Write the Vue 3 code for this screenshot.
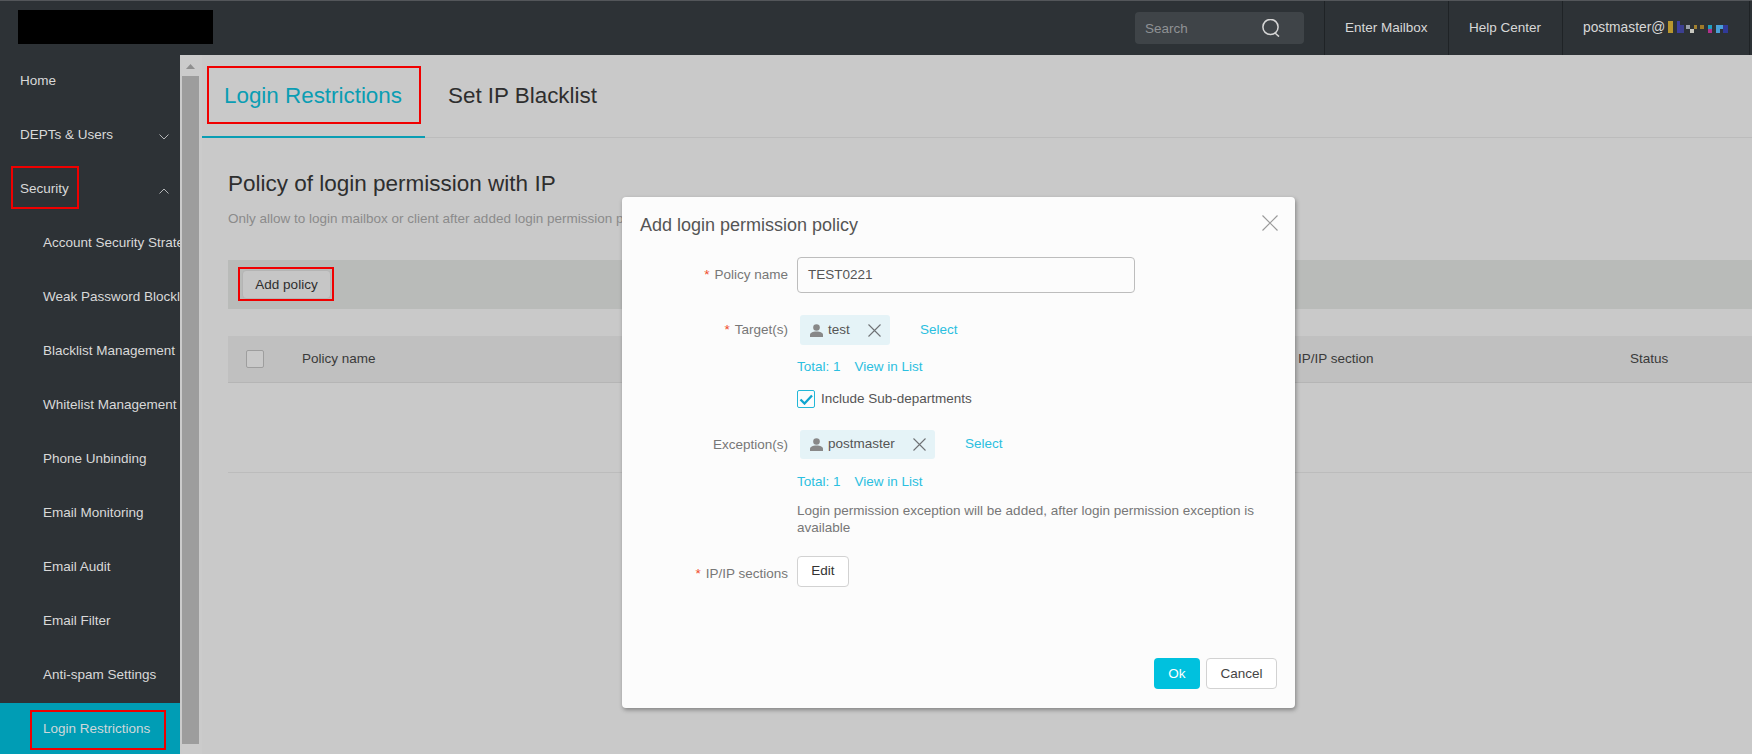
<script setup>
const navTop = [
  { label: 'Home' },
  { label: 'DEPTs & Users', chevron: 'down' },
  { label: 'Security', chevron: 'up' },
]
const navSub = [
  'Account Security Strategy',
  'Weak Password Blocklist',
  'Blacklist Management',
  'Whitelist Management',
  'Phone Unbinding',
  'Email Monitoring',
  'Email Audit',
  'Email Filter',
  'Anti-spam Settings',
]
const mosaic = [
  { x: 0, y: 0, w: 5, h: 12, c: '#b8962e' },
  { x: 9, y: 0, w: 3, h: 12, c: '#3c3fa0' },
  { x: 12, y: 4, w: 4, h: 8, c: '#3c3f90' },
  { x: 18, y: 4, w: 4, h: 4, c: '#9aa0a8' },
  { x: 22, y: 8, w: 4, h: 4, c: '#c8c8c0' },
  { x: 26, y: 4, w: 3, h: 4, c: '#a08030' },
  { x: 32, y: 4, w: 4, h: 4, c: '#a07a28' },
  { x: 40, y: 4, w: 4, h: 4, c: '#1f9fc0' },
  { x: 40, y: 8, w: 4, h: 4, c: '#b0308a' },
  { x: 48, y: 4, w: 4, h: 8, c: '#4aa0d8' },
  { x: 52, y: 4, w: 3, h: 4, c: '#4aa0d8' },
  { x: 55, y: 4, w: 5, h: 8, c: '#303a98' },
]
</script>

<template>
  <div class="page">
    <header class="topbar">
      <div class="logo"></div>
      <div class="search">
        <span class="search-text">Search</span>
        <svg class="search-icon" width="18" height="18" viewBox="0 0 18 18" fill="none">
          <circle cx="8.5" cy="8" r="7.6" stroke="#d6d6d6" stroke-width="1.5" />
          <path d="M13 14l4 3.6" stroke="#d6d6d6" stroke-width="1.5" />
        </svg>
      </div>
      <a class="top-link link-mail">Enter Mailbox</a>
      <a class="top-link link-help">Help Center</a>
      <a class="top-link link-user">
        <span class="user-name">postmaster@</span>
        <svg class="mosaic" width="60" height="12" viewBox="0 0 60 12">
          <rect v-for="(m, i) in mosaic" :key="i" :x="m.x" :y="m.y" :width="m.w" :height="m.h" :fill="m.c" />
        </svg>
      </a>
    </header>

    <div class="body">
      <nav class="sidebar">
        <div v-for="item in navTop" :key="item.label" class="nav-item">
          <span>{{ item.label }}</span>
          <svg v-if="item.chevron" class="chevron" width="10" height="6" viewBox="0 0 10 6" fill="none">
            <path :d="item.chevron === 'down' ? 'M.5 .5L5 5l4.500-4.500' : 'M.5 5.500L5 1l4.500 4.500'" stroke="#b4b6b8" stroke-width="1" />
          </svg>
        </div>
        <div v-for="label in navSub" :key="label" class="nav-item nav-sub">
          <span>{{ label }}</span>
        </div>
        <div class="nav-item nav-sub nav-active"><span>Login Restrictions</span></div>
      </nav>

      <div class="scrollbar">
        <svg class="scroll-arrow" width="9" height="5" viewBox="0 0 9 5"><path d="M4.500 0L9 5H0z" fill="#8f8f8f" /></svg>
        <div class="scroll-thumb"></div>
      </div>

      <main class="main">
        <div class="tabs">
          <div class="tab tab-active">Login Restrictions</div>
          <div class="tab">Set IP Blacklist</div>
        </div>
        <section class="content">
          <h1 class="title">Policy of login permission with IP</h1>
          <p class="subtitle">Only allow to login mailbox or client after added login permission policy</p>
          <div class="toolbar">
            <button class="add-btn">Add policy</button>
          </div>
          <div class="thead">
            <span class="th-check"></span>
            <span class="th-name">Policy name</span>
            <span class="th-ip">IP/IP section</span>
            <span class="th-status">Status</span>
          </div>
          <div class="tbody"></div>
        </section>
      </main>
    </div>

    <div class="modal">
      <div class="modal-title">Add login permission policy</div>
      <svg class="modal-close" width="16" height="16" viewBox="0 0 16 16" fill="none">
        <path d="M.5 .5l15 15M15.500 .5l-15 15" stroke="#9a9a9a" stroke-width="1.200" />
      </svg>

      <div class="row row-name">
        <label class="label"><i>*</i>Policy name</label>
        <div class="value"><div class="input">TEST0221</div></div>
      </div>

      <div class="row row-tag">
        <label class="label label-tag"><i>*</i>Target(s)</label>
        <div class="value">
          <div class="tag-line">
            <span class="tag tag-test">
              <svg class="person" width="13" height="13" viewBox="0 0 13 13"><circle cx="6.500" cy="3.500" r="3.300" fill="#888" /><path d="M0 13v-2.200C0 9 2.500 7.600 6.500 7.600S13 9 13 10.800V13z" fill="#888" /></svg>
              <span class="tag-text">test</span>
              <svg class="tag-x" width="13" height="13" viewBox="0 0 13 13" fill="none"><path d="M.5 .5l12 12M12.500 .5l-12 12" stroke="#6f7275" stroke-width="1.100" /></svg>
            </span>
            <a class="link select">Select</a>
          </div>
          <div class="totals"><a class="link">Total: 1</a><a class="link">View in List</a></div>
          <div class="check-line">
            <span class="checkbox">
              <svg width="14" height="12" viewBox="0 0 14 12" fill="none"><path d="M1.500 6.500L5.500 10.500L13 2.500" stroke="#0ea5cf" stroke-width="2.300" /></svg>
            </span>
            <span class="check-text">Include Sub-departments</span>
          </div>
        </div>
      </div>

      <div class="row row-tag">
        <label class="label label-tag">Exception(s)</label>
        <div class="value">
          <div class="tag-line">
            <span class="tag tag-post">
              <svg class="person" width="13" height="13" viewBox="0 0 13 13"><circle cx="6.500" cy="3.500" r="3.300" fill="#888" /><path d="M0 13v-2.200C0 9 2.500 7.600 6.500 7.600S13 9 13 10.800V13z" fill="#888" /></svg>
              <span class="tag-text">postmaster</span>
              <svg class="tag-x" width="13" height="13" viewBox="0 0 13 13" fill="none"><path d="M.5 .5l12 12M12.500 .5l-12 12" stroke="#6f7275" stroke-width="1.100" /></svg>
            </span>
            <a class="link select">Select</a>
          </div>
          <div class="totals totals-second"><a class="link">Total: 1</a><a class="link">View in List</a></div>
          <p class="note">Login permission exception will be added, after login permission exception is available</p>
        </div>
      </div>

      <div class="row row-edit">
        <label class="label label-edit"><i>*</i>IP/IP sections</label>
        <div class="value"><button class="edit-btn">Edit</button></div>
      </div>

      <div class="modal-footer">
        <button class="ok-btn">Ok</button>
        <button class="cancel-btn">Cancel</button>
      </div>
    </div>

    <div class="mark mark-security"></div>
    <div class="mark mark-side"></div>
    <div class="mark mark-tab"></div>
    <div class="mark mark-add"></div>
  </div>
</template>

<style>
html, body { margin: 0; padding: 0; }
</style>

<style scoped>
.page {
  position: relative;
  width: 1752px;
  height: 754px;
  overflow: hidden;
  background: #c9c9c9;
  font-family: "Liberation Sans", Arial, sans-serif;
  font-size: 13.500px;
  color: #333;
}

/* top bar */
.topbar {
  box-sizing: border-box;
  height: 55px;
  display: flex;
  align-items: stretch;
  background: #2d3236;
  border-top: 1px solid #53565a;
  padding-left: 18px;
}
.logo {
  width: 195px;
  height: 34px;
  margin-top: 9px;
  background: #000;
}
.search {
  box-sizing: border-box;
  width: 169px;
  height: 32px;
  margin: 11px 0 0 922px;
  padding-left: 10px;
  display: flex;
  align-items: center;
  background: #3f4448;
  border-radius: 4px;
}
.search-text { color: #8f9295; width: 117px; }
.search-icon { flex: none; }
.top-link {
  display: flex;
  align-items: center;
  box-sizing: border-box;
  height: 54px;
  color: #d8d8d8;
  padding-left: 20px;
  padding-bottom: 2px;
  border-left: 1px solid #1f2326;
}
.link-mail { margin-left: 20px; width: 124px; }
.link-help { width: 114px; }
.link-user { width: 188px; border-right: 1px solid #1f2326; }
.user-name { width: 85px; flex: none; font-size: 13.800px; }

/* body */
.body { display: flex; height: 699px; }
.sidebar {
  width: 180px;
  flex: none;
  background: #2d3236;
  color: #d9d9d9;
  overflow: hidden;
}
.nav-item {
  position: relative;
  height: 54px;
  padding-left: 20px;
  display: flex;
  align-items: center;
  white-space: nowrap;
  padding-bottom: 3px;
  box-sizing: border-box;
}
.nav-sub { padding-left: 43px; }
.nav-active { background: #009db5; color: #cfd8da; }
.chevron { position: absolute; left: 159px; top: 25px; }

.scrollbar {
  position: relative;
  width: 22px;
  flex: none;
  background: #cbcbcb;
}
.scroll-arrow { position: absolute; left: 6px; top: 9px; }
.scroll-thumb {
  position: absolute;
  left: 2px;
  top: 21px;
  width: 17px;
  height: 668px;
  background: #9d9d9d;
}

/* main */
.main { flex: 1; min-width: 0; }
.tabs {
  box-sizing: border-box;
  display: flex;
  height: 83px;
  border-bottom: 1px solid #bcbcbc;
}
.tab {
  box-sizing: border-box;
  height: 83px;
  padding: 26px 23px 0;
  line-height: 30px;
  font-size: 22.400px;
  color: #2e2e2e;
  white-space: nowrap;
}
.tab-active {
  width: 223px;
  padding-left: 22px;
  color: #0a9db3;
  border-bottom: 2px solid #0a9db3;
}
.content { padding: 0 0 0 26px; }
.title {
  margin: 33px 0 0;
  font-weight: 400;
  font-size: 22.500px;
  line-height: 26px;
  color: #2e2e2e;
}
.subtitle {
  margin: 13px 0 0;
  line-height: 18px;
  color: #8b8b8b;
  white-space: nowrap;
}
.toolbar {
  box-sizing: border-box;
  height: 49px;
  margin-top: 32px;
  padding: 10px 0 0 14px;
  background: #b9bbb9;
}
.add-btn {
  box-sizing: border-box;
  width: 89px;
  height: 29px;
  padding: 0;
  display: block;
  border: 1px solid #b4b4b4;
  border-radius: 4px;
  background: #c6c6c6;
  font: inherit;
  color: #2e2e2e;
}
.thead {
  position: relative;
  box-sizing: border-box;
  height: 47px;
  margin-top: 27px;
  padding-bottom: 1px;
  display: flex;
  align-items: center;
  background: #c0c0c0;
  border-bottom: 1px solid #b5b5b5;
  color: #3a3a3a;
}
.th-check {
  box-sizing: border-box;
  width: 18px;
  height: 18px;
  margin-left: 18px;
  border: 1px solid #9e9e9e;
  border-radius: 2px;
  background: #c9c9c9;
}
.th-name { margin-left: 38px; }
.th-ip { position: absolute; left: 1070px; }
.th-status { position: absolute; left: 1402px; }
.tbody { height: 89px; border-bottom: 1px solid #bcbcbc; }

/* modal */
.modal {
  position: absolute;
  left: 622px;
  top: 197px;
  box-sizing: border-box;
  width: 673px;
  height: 511px;
  padding-top: 18px;
  display: flex;
  flex-direction: column;
  background: #fcfcfc;
  border-radius: 4px;
  box-shadow: 1px 2px 4px rgba(0, 0, 0, .35);
}
.modal-title {
  padding-left: 18px;
  font-size: 18px;
  line-height: 20px;
  color: #555;
}
.modal-close { position: absolute; left: 640px; top: 18px; }
.row { display: flex; }
.row-name { margin-top: 22px; }
.row-tag { margin-top: 22px; }
.row-edit { margin-top: 20px; }
.label {
  flex: none;
  box-sizing: border-box;
  width: 166px;
  text-align: right;
  color: #777;
  line-height: 36px;
}
.label i {
  font-style: normal;
  color: #f04a2a;
  margin-right: 5px;
}
.label-tag { line-height: 30px; }
.value { margin-left: 9px; width: 470px; }
.input {
  box-sizing: border-box;
  width: 338px;
  height: 36px;
  padding: 0 10px;
  line-height: 33px;
  border: 1px solid #bdbdbd;
  border-radius: 4px;
  color: #555;
}
.tag-line { display: flex; align-items: center; }
.tag {
  box-sizing: border-box;
  height: 30px;
  margin-left: 3px;
  display: flex;
  align-items: center;
  background: #e5f3f7;
  border-radius: 3px;
  color: #555;
}
.tag-test { width: 90px; }
.tag-post { width: 135px; height: 29px; }
.person { margin-left: 10px; }
.tag-text { margin-left: 5px; padding-bottom: 2px; }
.tag-x { margin-left: auto; margin-right: 9px; }
.link { color: #2bbfe0; }
.select { margin-left: 30px; padding-bottom: 2px; }
.totals { display: flex; gap: 14px; margin-top: 12px; line-height: 20px; }
.totals-second { margin-top: 13px; }
.check-line {
  display: flex;
  align-items: center;
  gap: 6px;
  margin-top: 13px;
  height: 18px;
  color: #555;
}
.check-text { padding-bottom: 2px; }
.checkbox {
  box-sizing: border-box;
  width: 18px;
  height: 18px;
  border: 1px solid #22b8d8;
  border-radius: 2px;
  display: flex;
  align-items: center;
  justify-content: center;
}
.note {
  margin: 10px 0 0;
  line-height: 17px;
  color: #777;
}
.label-edit { line-height: 36px; }
.edit-btn {
  display: block;
  box-sizing: border-box;
  width: 52px;
  height: 31px;
  padding: 0 0 2px;
  background: #fff;
  border: 1px solid #d2d2d2;
  border-radius: 4px;
  font: inherit;
  color: #333;
}
.modal-footer {
  margin-top: auto;
  padding: 0 18px 19px 0;
  display: flex;
  justify-content: flex-end;
  gap: 6px;
}
.ok-btn, .cancel-btn {
  box-sizing: border-box;
  height: 31px;
  padding: 0 0 1px;
  border-radius: 4px;
  font: inherit;
}
.ok-btn { width: 46px; background: #00c1de; border: none; color: #fff; }
.cancel-btn { width: 71px; background: #fff; border: 1px solid #d2d2d2; color: #444; }

/* red annotation boxes */
.mark {
  position: absolute;
  box-sizing: border-box;
  border: 2px solid #f00000;
}
.mark-security { left: 11px; top: 166px; width: 68px; height: 43px; }
.mark-side { left: 30px; top: 710px; width: 136px; height: 40px; }
.mark-tab { left: 207px; top: 66px; width: 214px; height: 58px; }
.mark-add { left: 238px; top: 267px; width: 96px; height: 34px; }
</style>
